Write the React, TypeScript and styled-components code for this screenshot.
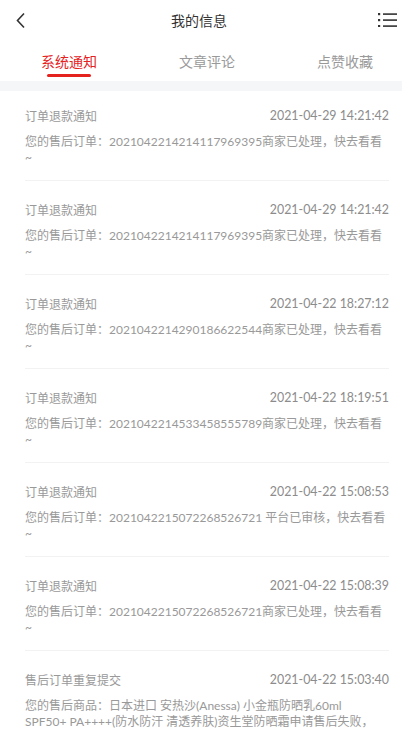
import styled, { createGlobalStyle } from "styled-components";

const GlobalStyle = createGlobalStyle`
  html, body {
    margin: 0;
    padding: 0;
    background: #ffffff;
    font-family: Lato, "Noto Sans CJK SC", sans-serif;
  }
`;

const messages = [
  {
    title: "订单退款通知",
    time: "2021-04-29 14:21:42",
    body: "您的售后订单：2021042214214117969395商家已处理，快去看看~",
  },
  {
    title: "订单退款通知",
    time: "2021-04-29 14:21:42",
    body: "您的售后订单：2021042214214117969395商家已处理，快去看看~",
  },
  {
    title: "订单退款通知",
    time: "2021-04-22 18:27:12",
    body: "您的售后订单：2021042214290186622544商家已处理，快去看看~",
  },
  {
    title: "订单退款通知",
    time: "2021-04-22 18:19:51",
    body: "您的售后订单：2021042214533458555789商家已处理，快去看看~",
  },
  {
    title: "订单退款通知",
    time: "2021-04-22 15:08:53",
    body: "您的售后订单：2021042215072268526721 平台已审核，快去看看~",
  },
  {
    title: "订单退款通知",
    time: "2021-04-22 15:08:39",
    body: "您的售后订单：2021042215072268526721商家已处理，快去看看~",
  },
  {
    title: "售后订单重复提交",
    time: "2021-04-22 15:03:40",
    body: "您的售后商品：日本进口 安热沙(Anessa) 小金瓶防晒乳60ml SPF50+ PA++++(防水防汗 清透养肤)资生堂防晒霜申请售后失败，",
  },
];

const tabs = ["系统通知", "文章评论", "点赞收藏"];

export default function App() {
  return (
    <>
      <GlobalStyle />
      <Page>
        <Header>
          <BackButton>
            <svg width="10" height="17" viewBox="0 0 10 17">
              <path d="M8 1.5 L1.5 8.5 L8 15.5" fill="none" stroke="#333" strokeWidth="1.6" />
            </svg>
          </BackButton>
          <HeaderTitle>我的信息</HeaderTitle>
          <MenuButton>
            <svg width="19" height="16" viewBox="0 0 19 16">
              <rect x="0" y="2" width="2.2" height="2.2" fill="#333" />
              <rect x="0" y="8" width="2.2" height="2.2" fill="#333" />
              <rect x="0" y="14" width="2.2" height="2.2" fill="#333" />
              <rect x="5" y="2.3" width="14" height="1.6" fill="#333" />
              <rect x="5" y="8.3" width="14" height="1.6" fill="#333" />
              <rect x="5" y="14.3" width="14" height="1.6" fill="#333" />
            </svg>
          </MenuButton>
        </Header>

        <TabBar>
          {tabs.map((t, i) => (
            <Tab key={t} $active={i === 0}>
              {t}
            </Tab>
          ))}
        </TabBar>

        <Divider />

        <List>
          {messages.map((m, i) => (
            <Item key={i}>
              <ItemHead>
                <ItemTitle>{m.title}</ItemTitle>
                <ItemTime>{m.time}</ItemTime>
              </ItemHead>
              <ItemBody>{m.body}</ItemBody>
            </Item>
          ))}
        </List>
      </Page>
    </>
  );
}

const Page = styled.div`
  width: 402px;
  height: 732px;
  overflow: hidden;
  background: #fff;
`;

const Header = styled.div`
  height: 40px;
  display: flex;
  align-items: center;
  justify-content: space-between;
  padding: 0 5px 0 16px;
`;

const BackButton = styled.div`
  width: 12px;
  display: flex;
  align-items: center;
  padding-top: 1px;
`;

const HeaderTitle = styled.div`
  font-size: 14px;
  color: #333;
  margin-left: -8px;
`;

const MenuButton = styled.div`
  display: flex;
  align-items: center;
  padding-bottom: 2px;
`;

const TabBar = styled.div`
  display: flex;
  height: 41px;
  white-space: nowrap;
`;

const Tab = styled.div<{ $active?: boolean }>`
  flex: 0 0 138px;
  position: relative;
  text-align: center;
  font-size: 14px;
  line-height: 20px;
  padding-top: 12px;
  color: ${(p) => (p.$active ? "#e4231f" : "#999")};

  &::after {
    content: "";
    display: ${(p) => (p.$active ? "block" : "none")};
    position: absolute;
    left: 47px;
    top: 34px;
    width: 44px;
    height: 3px;
    border-radius: 2px;
    background: #e4231f;
  }
`;

const Divider = styled.div`
  height: 10px;
  background: #f5f6f8;
`;

const List = styled.div`
  padding: 0 13px 0 25px;
`;

const Item = styled.div`
  padding: 16px 0 14px;
  margin-bottom: 4px;
  border-bottom: 1px solid #f2f2f2;
`;

const ItemHead = styled.div`
  display: flex;
  justify-content: space-between;
  align-items: center;
  height: 16px;
`;

const ItemTitle = styled.div`
  font-size: 12px;
  color: #999;
`;

const ItemTime = styled.div`
  font-size: 12.4px;
  color: #8c8c8c;
`;

const ItemBody = styled.div`
  margin-top: 11px;
  padding-right: 3px;
  font-size: 12px;
  line-height: 16px;
  color: #999;
`;
